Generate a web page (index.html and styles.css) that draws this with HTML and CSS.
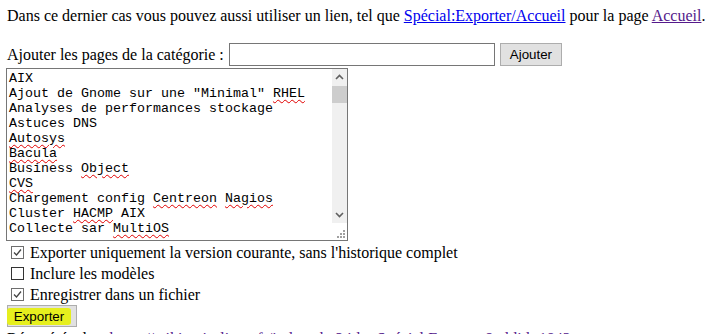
FILE: index.html
```html
<!DOCTYPE html>
<html lang="fr">
<head>
    <meta charset="UTF-8">
    <title>Exporter des pages</title>
    <link rel="stylesheet" href="styles.css">
</head>
<body>

<p class="intro">Dans ce dernier cas vous pouvez aussi utiliser un lien, tel que <a href="#">Spécial:Exporter/Accueil</a> pour la page <a class="visited" href="#">Accueil</a>.</p>

<form class="export-form">
    <div class="addcat">
        <label for="catname">Ajouter les pages de la catégorie :</label>
        <input type="text" id="catname" class="catname">
        <button type="button" class="btn">Ajouter</button>
    </div>

    <div class="pagebox">
        <div class="pagelist">
            <div>AIX</div>
            <div>Ajout de Gnome sur une "Minimal" <span class="typo">RHEL</span></div>
            <div>Analyses de performances stockage</div>
            <div>Astuces DNS</div>
            <div><span class="typo">Autosys</span></div>
            <div><span class="typo">Bacula</span></div>
            <div>Business <span class="typo">Object</span></div>
            <div><span class="typo">CVS</span></div>
            <div>Chargement config <span class="typo">Centreon</span> <span class="typo">Nagios</span></div>
            <div>Cluster <span class="typo">HACMP</span> AIX</div>
            <div>Collecte sar <span class="typo">MultiOS</span></div>
        </div>
        <div class="scrollbar">
            <div class="track">
                <span class="arrow">
                    <svg width="15" height="17" viewBox="0 0 15 17"><polyline points="4,10 7.5,6.5 11,10" fill="none" stroke="#606060" stroke-width="1.6"/></svg>
                </span>
                <span class="thumb"></span>
                <span class="spacer"></span>
                <span class="arrow">
                    <svg width="15" height="17" viewBox="0 0 15 17"><polyline points="4,7 7.5,10.5 11,7" fill="none" stroke="#606060" stroke-width="1.6"/></svg>
                </span>
            </div>
            <span class="grip">
                <svg width="15" height="17" viewBox="0 0 15 17">
                    <rect x="11" y="7" width="2" height="2" fill="#a0a0a0"/>
                    <rect x="8" y="10" width="2" height="2" fill="#a0a0a0"/>
                    <rect x="11" y="10" width="2" height="2" fill="#a0a0a0"/>
                    <rect x="5" y="13" width="2" height="2" fill="#a0a0a0"/>
                    <rect x="8" y="13" width="2" height="2" fill="#a0a0a0"/>
                    <rect x="11" y="13" width="2" height="2" fill="#a0a0a0"/>
                </svg>
            </span>
        </div>
    </div>

    <div class="options">
        <label class="option">
            <span class="box checked"><svg width="11" height="11" viewBox="0 0 11 11"><polyline points="2,5.5 4.5,8 9,2.5" fill="none" stroke="#444" stroke-width="1.3"/></svg></span>
            Exporter uniquement la version courante, sans l'historique complet
        </label>
        <label class="option">
            <span class="box"></span>
            Inclure les modèles
        </label>
        <label class="option">
            <span class="box checked"><svg width="11" height="11" viewBox="0 0 11 11"><polyline points="2,5.5 4.5,8 9,2.5" fill="none" stroke="#444" stroke-width="1.3"/></svg></span>
            Enregistrer dans un fichier
        </label>
    </div>

    <button type="button" class="btn export-btn"><span class="mark">Exporter</span></button>
</form>

<p class="footer">Récupérée de « <a class="visited" href="#">https://wiki.unix-linux.fr/index.php?title=Spécial:Exporter&amp;oldid=1842</a> »</p>

</body>
</html>
```

FILE: styles.css
```css
html {
    overflow: hidden;
}
body {
    margin: 0;
    padding: 0 7px;
    font-family: "Liberation Serif", "Times New Roman", serif;
    font-size: 16px;
    color: #000;
    background: #fff;
}
a {
    color: #0000ee;
}
a.visited {
    color: #551a8b;
}
.intro {
    margin: 7px 0 0;
    line-height: 18px;
    white-space: nowrap;
}

/* category row */
.addcat {
    display: flex;
    align-items: center;
    gap: 5px;
    margin-top: 18px;
    line-height: 18px;
}
.catname {
    box-sizing: border-box;
    width: 266px;
    height: 23px;
    margin: 0;
    border: 1px solid #767676;
    padding: 1px 2px;
}
.btn {
    box-sizing: border-box;
    height: 23px;
    padding: 0 9px;
    background: #e1e1e1;
    border: 1px solid #adadad;
    border-radius: 0;
    font-family: "Liberation Sans", Arial, sans-serif;
    font-size: 13.33px;
    color: #000;
}

/* page list box */
.pagebox {
    box-sizing: border-box;
    display: flex;
    width: 342px;
    height: 173px;
    margin-top: 2px;
    margin-left: -1px;
    border: 1px solid #767676;
}
.pagelist {
    flex: 1;
    overflow: hidden;
    padding: 2px 2px 0;
    font-family: "Liberation Mono", "Courier New", monospace;
    font-size: 13.33px;
    line-height: 15px;
}
.pagelist div {
    white-space: pre;
}
.typo {
    text-decoration: underline wavy #e00000;
    text-decoration-thickness: 1px;
    text-underline-offset: 2px;
}
.scrollbar {
    width: 15px;
    display: flex;
    flex-direction: column;
}
.track {
    flex: 1;
    display: flex;
    flex-direction: column;
    background: #f0f0f0;
}
.arrow {
    display: block;
    height: 17px;
}
.arrow svg {
    display: block;
}
.thumb {
    display: block;
    height: 17px;
    background: #cdcdcd;
}
.spacer {
    flex: 1;
}
.grip {
    display: block;
    height: 17px;
    background: #fff;
}
.grip svg {
    display: block;
}

/* options */
.options {
    margin-top: 1px;
}
.option {
    display: flex;
    align-items: center;
    line-height: 21px;
    white-space: nowrap;
}
.box {
    box-sizing: border-box;
    display: flex;
    align-items: center;
    justify-content: center;
    width: 13px;
    height: 13px;
    margin: 0 6px 0 4px;
    border: 1px solid #333;
    background: #fff;
}
.box.checked {
    border-color: #6e6e6e;
}

/* export button with marker highlight */
.export-btn {
    display: block;
    height: 22px;
    width: 70px;
    padding: 0 5px 0 0;
    margin-left: 0;
}
.mark {
    display: block;
    height: 17px;
    line-height: 17px;
    margin-left: -1px;
    background: #e6ef1e;
    border-radius: 3px;
    text-align: center;
}
.footer {
    margin: 3px 0 0;
    line-height: 18px;
    white-space: nowrap;
}
```
